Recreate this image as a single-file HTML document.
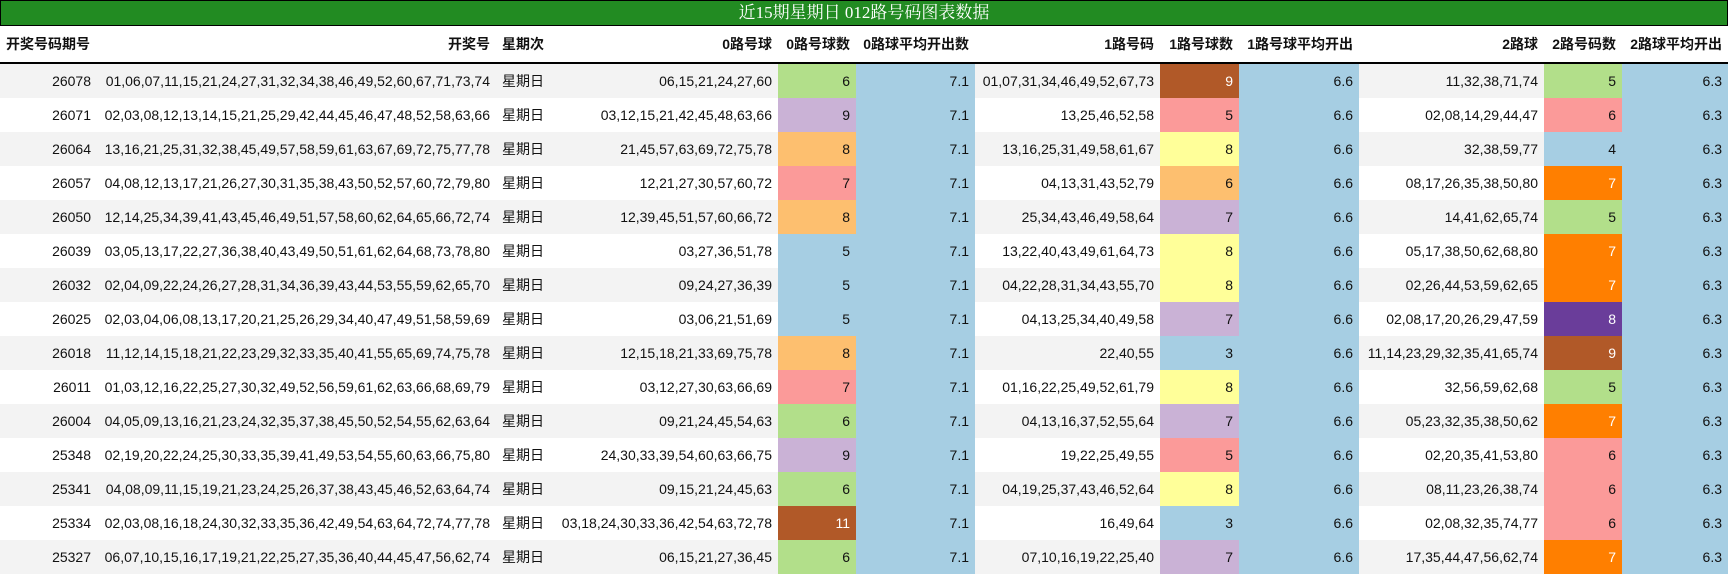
<!DOCTYPE html>
<html><head><meta charset="utf-8"><style>
body{margin:0;width:1728px;height:574px;overflow:hidden;background:#fff;font-family:"Liberation Sans","Noto Sans CJK SC",sans-serif;font-size:14px;color:#111}
.t{height:24px;background:#228b22;border:1px solid #000;color:#fff;text-align:center;font-family:"Liberation Serif","Noto Serif CJK SC",serif;font-size:17px;line-height:24px}
table{border-collapse:collapse;table-layout:fixed;width:1728px}
th{height:36px;font-weight:bold;text-align:right;padding:0 6px;border-bottom:2px solid #000;white-space:nowrap;font-size:14px}
td{height:34px;padding:0 6px;text-align:right;white-space:nowrap;overflow:hidden}
tr:nth-child(odd) td{background:#f3f3f3}
tr:nth-child(even) td{background:#fff}
.l{text-align:left}
td.g{background:#b2df8a!important}td.p{background:#cab2d6!important}td.o{background:#fdbf6f!important}
td.k{background:#fb9a99!important}td.y{background:#ffff99!important}td.b{background:#a6cee3!important}
td.br{background:#b15928!important;color:#fff}td.or{background:#ff7f00!important;color:#fff}td.dp{background:#6a3d9a!important;color:#fff}
</style></head><body>
<div class="t">近15期星期日 012路号码图表数据</div>
<table>
<colgroup><col style="width:97px"><col style="width:399px"><col style="width:55px"><col style="width:227px"><col style="width:78px"><col style="width:119px"><col style="width:185px"><col style="width:79px"><col style="width:120px"><col style="width:185px"><col style="width:78px"><col style="width:106px"></colgroup>
<thead><tr><th class="l">开奖号码期号</th><th>开奖号</th><th class="l">星期次</th><th>0路号球</th><th>0路号球数</th><th>0路球平均开出数</th><th>1路号码</th><th>1路号球数</th><th>1路号球平均开出</th><th>2路球</th><th>2路号码数</th><th>2路球平均开出</th></tr></thead>
<tbody>
<tr><td>26078</td><td>01,06,07,11,15,21,24,27,31,32,34,38,46,49,52,60,67,71,73,74</td><td class="l">星期日</td><td>06,15,21,24,27,60</td><td class="g">6</td><td class="b">7.1</td><td>01,07,31,34,46,49,52,67,73</td><td class="br">9</td><td class="b">6.6</td><td>11,32,38,71,74</td><td class="g">5</td><td class="b">6.3</td></tr>
<tr><td>26071</td><td>02,03,08,12,13,14,15,21,25,29,42,44,45,46,47,48,52,58,63,66</td><td class="l">星期日</td><td>03,12,15,21,42,45,48,63,66</td><td class="p">9</td><td class="b">7.1</td><td>13,25,46,52,58</td><td class="k">5</td><td class="b">6.6</td><td>02,08,14,29,44,47</td><td class="k">6</td><td class="b">6.3</td></tr>
<tr><td>26064</td><td>13,16,21,25,31,32,38,45,49,57,58,59,61,63,67,69,72,75,77,78</td><td class="l">星期日</td><td>21,45,57,63,69,72,75,78</td><td class="o">8</td><td class="b">7.1</td><td>13,16,25,31,49,58,61,67</td><td class="y">8</td><td class="b">6.6</td><td>32,38,59,77</td><td class="b">4</td><td class="b">6.3</td></tr>
<tr><td>26057</td><td>04,08,12,13,17,21,26,27,30,31,35,38,43,50,52,57,60,72,79,80</td><td class="l">星期日</td><td>12,21,27,30,57,60,72</td><td class="k">7</td><td class="b">7.1</td><td>04,13,31,43,52,79</td><td class="o">6</td><td class="b">6.6</td><td>08,17,26,35,38,50,80</td><td class="or">7</td><td class="b">6.3</td></tr>
<tr><td>26050</td><td>12,14,25,34,39,41,43,45,46,49,51,57,58,60,62,64,65,66,72,74</td><td class="l">星期日</td><td>12,39,45,51,57,60,66,72</td><td class="o">8</td><td class="b">7.1</td><td>25,34,43,46,49,58,64</td><td class="p">7</td><td class="b">6.6</td><td>14,41,62,65,74</td><td class="g">5</td><td class="b">6.3</td></tr>
<tr><td>26039</td><td>03,05,13,17,22,27,36,38,40,43,49,50,51,61,62,64,68,73,78,80</td><td class="l">星期日</td><td>03,27,36,51,78</td><td class="b">5</td><td class="b">7.1</td><td>13,22,40,43,49,61,64,73</td><td class="y">8</td><td class="b">6.6</td><td>05,17,38,50,62,68,80</td><td class="or">7</td><td class="b">6.3</td></tr>
<tr><td>26032</td><td>02,04,09,22,24,26,27,28,31,34,36,39,43,44,53,55,59,62,65,70</td><td class="l">星期日</td><td>09,24,27,36,39</td><td class="b">5</td><td class="b">7.1</td><td>04,22,28,31,34,43,55,70</td><td class="y">8</td><td class="b">6.6</td><td>02,26,44,53,59,62,65</td><td class="or">7</td><td class="b">6.3</td></tr>
<tr><td>26025</td><td>02,03,04,06,08,13,17,20,21,25,26,29,34,40,47,49,51,58,59,69</td><td class="l">星期日</td><td>03,06,21,51,69</td><td class="b">5</td><td class="b">7.1</td><td>04,13,25,34,40,49,58</td><td class="p">7</td><td class="b">6.6</td><td>02,08,17,20,26,29,47,59</td><td class="dp">8</td><td class="b">6.3</td></tr>
<tr><td>26018</td><td>11,12,14,15,18,21,22,23,29,32,33,35,40,41,55,65,69,74,75,78</td><td class="l">星期日</td><td>12,15,18,21,33,69,75,78</td><td class="o">8</td><td class="b">7.1</td><td>22,40,55</td><td class="b">3</td><td class="b">6.6</td><td>11,14,23,29,32,35,41,65,74</td><td class="br">9</td><td class="b">6.3</td></tr>
<tr><td>26011</td><td>01,03,12,16,22,25,27,30,32,49,52,56,59,61,62,63,66,68,69,79</td><td class="l">星期日</td><td>03,12,27,30,63,66,69</td><td class="k">7</td><td class="b">7.1</td><td>01,16,22,25,49,52,61,79</td><td class="y">8</td><td class="b">6.6</td><td>32,56,59,62,68</td><td class="g">5</td><td class="b">6.3</td></tr>
<tr><td>26004</td><td>04,05,09,13,16,21,23,24,32,35,37,38,45,50,52,54,55,62,63,64</td><td class="l">星期日</td><td>09,21,24,45,54,63</td><td class="g">6</td><td class="b">7.1</td><td>04,13,16,37,52,55,64</td><td class="p">7</td><td class="b">6.6</td><td>05,23,32,35,38,50,62</td><td class="or">7</td><td class="b">6.3</td></tr>
<tr><td>25348</td><td>02,19,20,22,24,25,30,33,35,39,41,49,53,54,55,60,63,66,75,80</td><td class="l">星期日</td><td>24,30,33,39,54,60,63,66,75</td><td class="p">9</td><td class="b">7.1</td><td>19,22,25,49,55</td><td class="k">5</td><td class="b">6.6</td><td>02,20,35,41,53,80</td><td class="k">6</td><td class="b">6.3</td></tr>
<tr><td>25341</td><td>04,08,09,11,15,19,21,23,24,25,26,37,38,43,45,46,52,63,64,74</td><td class="l">星期日</td><td>09,15,21,24,45,63</td><td class="g">6</td><td class="b">7.1</td><td>04,19,25,37,43,46,52,64</td><td class="y">8</td><td class="b">6.6</td><td>08,11,23,26,38,74</td><td class="k">6</td><td class="b">6.3</td></tr>
<tr><td>25334</td><td>02,03,08,16,18,24,30,32,33,35,36,42,49,54,63,64,72,74,77,78</td><td class="l">星期日</td><td>03,18,24,30,33,36,42,54,63,72,78</td><td class="br">11</td><td class="b">7.1</td><td>16,49,64</td><td class="b">3</td><td class="b">6.6</td><td>02,08,32,35,74,77</td><td class="k">6</td><td class="b">6.3</td></tr>
<tr><td>25327</td><td>06,07,10,15,16,17,19,21,22,25,27,35,36,40,44,45,47,56,62,74</td><td class="l">星期日</td><td>06,15,21,27,36,45</td><td class="g">6</td><td class="b">7.1</td><td>07,10,16,19,22,25,40</td><td class="p">7</td><td class="b">6.6</td><td>17,35,44,47,56,62,74</td><td class="or">7</td><td class="b">6.3</td></tr>
</tbody></table>
</body></html>
